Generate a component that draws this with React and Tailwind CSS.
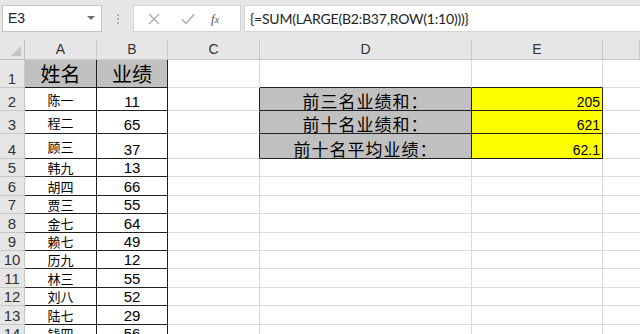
import React from "react";

const rows = [
  ["陈一", "11"],
  ["程二", "65"],
  ["顾三", "37"],
  ["韩九", "13"],
  ["胡四", "66"],
  ["贾三", "55"],
  ["金七", "64"],
  ["赖七", "49"],
  ["历九", "12"],
  ["林三", "55"],
  ["刘八", "52"],
  ["陆七", "29"],
  ["钱四", "56"],
];

const heights = ["h-[23px]", "h-[23px]", "h-[25px]", "h-[18px]", "h-[19px]", "h-[18px]", "h-[19px]", "h-[18px]", "h-[18px]", "h-[19px]", "h-[18px]", "h-[19px]", "h-[18px]"];

const summary = {
  2: ["前三名业绩和：", "205"],
  3: ["前十名业绩和：", "621"],
  4: ["前十名平均业绩：", "62.1"],
};

const cjk = { fontFamily: '"Noto Sans CJK SC", sans-serif' };
const lib = { fontFamily: '"Liberation Sans", Arial, sans-serif' };

function RowHeader({ n, h }) {
  return (
    <div className={`${h} w-[25px] shrink-0 flex items-end justify-center pb-[1px] bg-[#e6e6e6] border-r border-b border-[#c8c8c8] text-[15px] text-[#333] leading-none`} style={lib}>
      {n}
    </div>
  );
}

export default function App() {
  return (
    <div className="w-[640px] h-[334px] overflow-hidden bg-white select-none">
      {/* Toolbar */}
      <div className="h-[40px] bg-[#e6e6e6] flex items-start pt-[5px] pl-[2px]">
        <div className="w-[100px] h-[27px] bg-white border border-[#c6c6c6] flex items-center justify-between px-[5px]">
          <span className="text-[14px] text-[#222]" style={lib}>E3</span>
          <svg width="8" height="5" viewBox="0 0 8 5" className="mr-[1px]"><path d="M0 0 L8 0 L4 4 Z" fill="#707070" /></svg>
        </div>
        <div className="w-[31px] h-[27px] flex flex-col items-center justify-center gap-[2px]">
          <span className="w-[2px] h-[2px] bg-[#b0b0b0]" />
          <span className="w-[2px] h-[2px] bg-[#b0b0b0]" />
          <span className="w-[2px] h-[2px] bg-[#b0b0b0]" />
        </div>
        <div className="w-[108px] h-[27px] bg-white border border-[#d4d4d4] flex items-center">
          <svg width="12" height="12" viewBox="0 0 12 12" className="ml-[14px]"><path d="M1 1 L11 11 M11 1 L1 11" stroke="#a8a8a8" strokeWidth="1.3" /></svg>
          <svg width="14" height="12" viewBox="0 0 14 12" className="ml-[21px]"><path d="M1 6.5 L5 10.5 L13 1.5" stroke="#a8a8a8" strokeWidth="1.3" fill="none" /></svg>
          <span className="ml-[16px] text-[13px] italic text-[#555]" style={{ fontFamily: '"Liberation Serif", serif' }}>f<span className="text-[10px]">x</span></span>
        </div>
        <div className="ml-[3px] flex-1 h-[27px] bg-white border border-[#d4d4d4] border-r-0 flex items-center pl-[5px]">
          <span className="text-[14px] text-[#222] tracking-[-0.2px]" style={{ fontFamily: 'Lato, sans-serif' }}>{"{=SUM(LARGE(B2:B37,ROW(1:10)))}"}</span>
        </div>
      </div>

      {/* Column header */}
      <div className="flex h-[20px]">
        <div className="w-[25px] shrink-0 bg-[#e6e6e6] border-r border-b border-[#bdbdbd] relative">
          <svg width="10" height="10" viewBox="0 0 10 10" className="absolute right-[3px] bottom-[3px]"><path d="M10 0 L10 10 L0 10 Z" fill="#c4c4c4" /></svg>
        </div>
        {[
          ["A", "w-[72px]"],
          ["B", "w-[71px]"],
          ["C", "w-[92px]"],
          ["D", "w-[212px]"],
          ["E", "w-[131px]"],
          ["", "flex-1"],
        ].map(([l, w]) => (
          <div key={l || "f"} className={`${w} shrink-0 bg-[#e6e6e6] border-r border-b border-[#c8c8c8] flex items-center justify-center text-[14px] text-[#333]`} style={lib}>
            {l}
          </div>
        ))}
      </div>

      {/* Row 1 */}
      <div className="flex h-[28px]">
        <RowHeader n="1" h="h-[28px]" />
        <div className="w-[72px] shrink-0 bg-[#c0c0c0] border-r border-b border-[#202020] flex items-center justify-center text-[20px] text-black" style={cjk}>姓名</div>
        <div className="w-[71px] shrink-0 bg-[#c0c0c0] border-r border-b border-[#202020] flex items-center justify-center text-[20px] text-black" style={cjk}>业绩</div>
        <div className="w-[92px] shrink-0 border-r border-b border-[#dadada]" />
        <div className="w-[212px] shrink-0 border-r border-b border-r-[#dadada] border-b-[#202020]" />
        <div className="w-[131px] shrink-0 border-r border-b border-r-[#dadada] border-b-[#202020]" />
        <div className="flex-1 border-b border-[#dadada]" />
      </div>

      {rows.map(([name, val], i) => {
        const r = i + 2;
        const h = heights[i];
        const s = summary[r];
        return (
          <div key={r} className={`flex ${h}`}>
            <RowHeader n={String(r)} h={h} />
            <div className="w-[72px] shrink-0 border-r border-b border-[#202020] flex items-center justify-center text-[13px] text-black leading-none" style={cjk}>{name}</div>
            <div className="w-[71px] shrink-0 border-r border-b border-[#202020] flex items-end justify-center pb-[1px] text-[15px] text-black leading-none" style={lib}>{val}</div>
            {s ? (
              <>
                <div className="w-[92px] shrink-0 border-r border-b border-r-[#202020] border-b-[#dadada]" />
                <div className="w-[212px] shrink-0 bg-[#c0c0c0] border-r border-b border-[#202020] flex items-end justify-center pb-[1px] text-[17px] text-black leading-none tracking-[1px]" style={cjk}>{s[0]}</div>
                <div className="w-[131px] shrink-0 bg-[#ffff00] border-r border-b border-[#202020] flex items-end justify-end pr-[2px] pb-[1px] text-[14px] text-black leading-none" style={lib}>{s[1]}</div>
              </>
            ) : (
              <>
                <div className="w-[92px] shrink-0 border-r border-b border-[#dadada]" />
                <div className="w-[212px] shrink-0 border-r border-b border-[#dadada]" />
                <div className="w-[131px] shrink-0 border-r border-b border-[#dadada]" />
              </>
            )}
            <div className="flex-1 border-b border-[#dadada]" />
          </div>
        );
      })}
    </div>
  );
}
